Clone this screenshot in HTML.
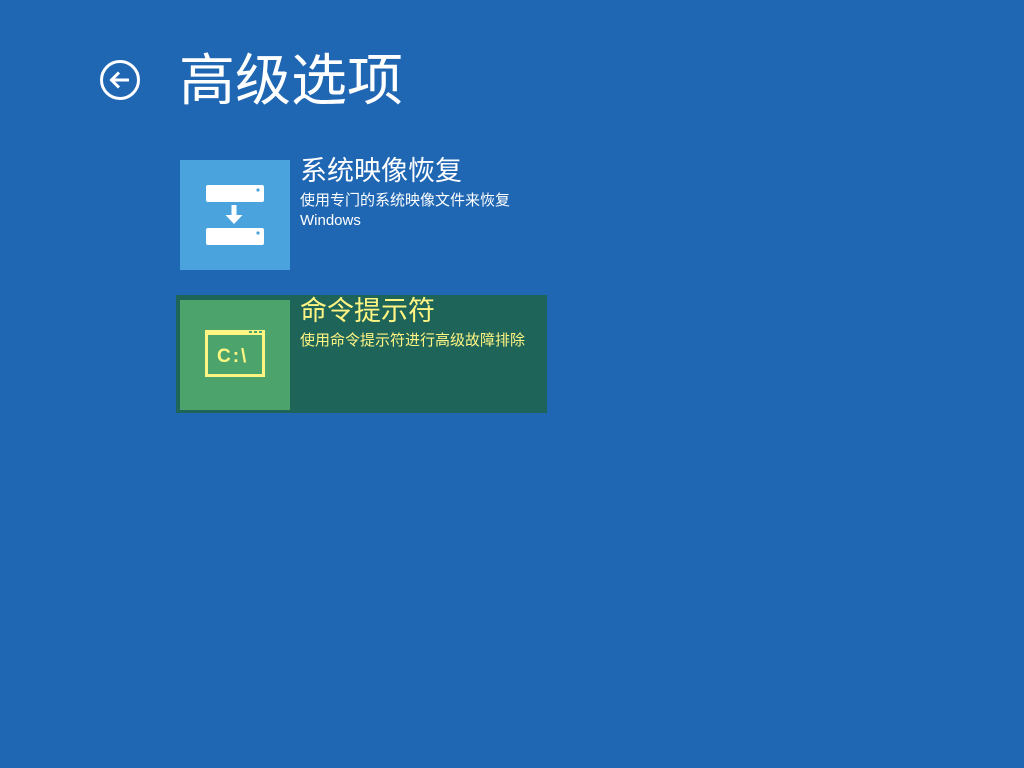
<!DOCTYPE html>
<html><head><meta charset="utf-8"><style>
html,body{margin:0;padding:0;}
body{width:1024px;height:768px;background:#1f66b3;position:relative;overflow:hidden;font-family:"Liberation Sans","Noto Sans CJK SC",sans-serif;color:#fff;}
.a{position:absolute;white-space:nowrap;}
</style></head><body>
<svg class="a" style="left:98px;top:58px" width="44" height="44" viewBox="0 0 44 44">
<circle cx="22" cy="22" r="18.5" fill="none" stroke="#fff" stroke-width="3"/>
<path d="M31 22H14M21 14.5L13.5 22L21 29.5" fill="none" stroke="#fff" stroke-width="3"/>
</svg>
<div class="a" style="left:179px;top:47px;font-size:56px;line-height:68px;">高级选项</div>

<div class="a" style="left:180px;top:160px;width:110px;height:110px;background:#4aa3dc;"></div>
<svg class="a" style="left:180px;top:160px" width="110" height="110">
<rect x="26" y="25" width="58" height="17" rx="2" fill="#fff"/>
<circle cx="78" cy="30" r="1.6" fill="#4aa3dc"/>
<rect x="26" y="68" width="58" height="17" rx="2" fill="#fff"/>
<circle cx="78" cy="73" r="1.6" fill="#4aa3dc"/>
<path d="M51.5 45h5v10h6l-8.5 9-8.5-9h6z" fill="#fff"/>
</svg>
<div class="a" style="left:300px;top:154px;font-size:27px;line-height:34px;">系统映像恢复</div>
<div class="a" style="left:300px;top:191px;font-size:15px;line-height:20px;">使用专门的系统映像文件来恢复<br>Windows</div>

<div class="a" style="left:176px;top:295px;width:371px;height:118px;background:#1f6458;"></div>
<div class="a" style="left:180px;top:300px;width:110px;height:110px;background:#4ca46c;"></div>
<svg class="a" style="left:180px;top:300px" width="110" height="110">
<rect x="26.5" y="31.5" width="57" height="44" fill="none" stroke="#fef582" stroke-width="3"/>
<rect x="25" y="30" width="60" height="5" fill="#fef582"/>
<rect x="69" y="31" width="3" height="2" fill="#4ca46c"/><rect x="74" y="31" width="3" height="2" fill="#4ca46c"/><rect x="79" y="31" width="3" height="2" fill="#4ca46c"/>
<text x="37" y="62" font-family="Liberation Sans,sans-serif" font-size="19" font-weight="bold" letter-spacing="2" fill="#fef582">C:\</text>
</svg>
<div class="a" style="left:300px;top:294px;font-size:27px;line-height:34px;color:#fef582;">命令提示符</div>
<div class="a" style="left:300px;top:331px;font-size:15px;line-height:20px;color:#fef582;">使用命令提示符进行高级故障排除</div>
</body></html>
